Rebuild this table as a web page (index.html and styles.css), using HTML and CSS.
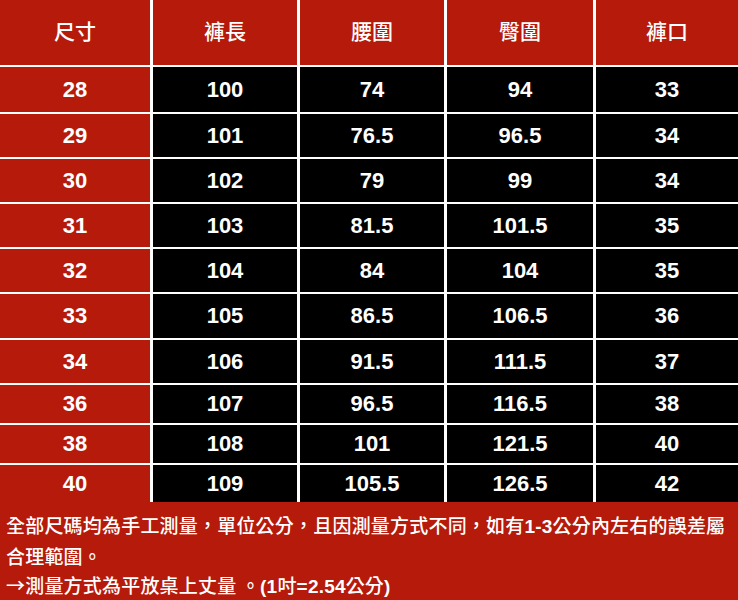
FILE: index.html
```html
<!DOCTYPE html>
<html lang="zh-Hant">
<head>
<meta charset="utf-8">
<title>尺寸表</title>
<link rel="stylesheet" href="styles.css">
</head>
<body>
<div class="sheet">
  <div class="size-table">
    <div class="cell head">尺寸</div>
    <div class="cell head">褲長</div>
    <div class="cell head">腰圍</div>
    <div class="cell head">臀圍</div>
    <div class="cell head">褲口</div>

    <div class="cell key">28</div><div class="cell val">100</div><div class="cell val">74</div><div class="cell val">94</div><div class="cell val">33</div>
    <div class="cell key">29</div><div class="cell val">101</div><div class="cell val">76.5</div><div class="cell val">96.5</div><div class="cell val">34</div>
    <div class="cell key">30</div><div class="cell val">102</div><div class="cell val">79</div><div class="cell val">99</div><div class="cell val">34</div>
    <div class="cell key">31</div><div class="cell val">103</div><div class="cell val">81.5</div><div class="cell val">101.5</div><div class="cell val">35</div>
    <div class="cell key">32</div><div class="cell val">104</div><div class="cell val">84</div><div class="cell val">104</div><div class="cell val">35</div>
    <div class="cell key">33</div><div class="cell val">105</div><div class="cell val">86.5</div><div class="cell val">106.5</div><div class="cell val">36</div>
    <div class="cell key">34</div><div class="cell val">106</div><div class="cell val">91.5</div><div class="cell val">111.5</div><div class="cell val">37</div>
    <div class="cell key">36</div><div class="cell val">107</div><div class="cell val">96.5</div><div class="cell val">116.5</div><div class="cell val">38</div>
    <div class="cell key">38</div><div class="cell val">108</div><div class="cell val">101</div><div class="cell val">121.5</div><div class="cell val">40</div>
    <div class="cell key">40</div><div class="cell val">109</div><div class="cell val">105.5</div><div class="cell val">126.5</div><div class="cell val">42</div>
  </div>
  <div class="notes">
    <p>全部尺碼均為手工測量<span class="punct">，</span>單位公分<span class="punct">，</span>且因測量方式不同<span class="punct">，</span>如有<span class="num">1-3</span>公分內左右的誤差屬合理範圍<span class="punct">。</span></p>
    <p>→測量方式為平放桌上丈量 <span class="punct">。</span><span class="num">(1</span>吋<span class="num">=2.54</span>公分<span class="num">)</span></p>
  </div>
</div>
</body>
</html>
```
FILE: styles.css
```css
html, body {
  margin: 0;
  padding: 0;
  background: #b51a0b;
}

.sheet {
  width: 738px;
  height: 600px;
  background: #b51a0b;
  overflow: hidden;
}

.size-table {
  display: grid;
  grid-template-columns: 150px 144px 144px 146px 1fr;
  grid-template-rows: 65px 45px 43px 43px 43px 43px 44px 43px 38px 38px 37px;
  column-gap: 3px;
  row-gap: 2px;
  background: #ffffff;
}

.cell {
  display: flex;
  align-items: center;
  justify-content: center;
  color: #ffffff;
  font-family: "Liberation Sans", "Noto Sans CJK TC", sans-serif;
  font-weight: bold;
  font-size: 22px;
}

.head {
  background: #b51a0b;
  font-family: "Noto Sans CJK TC", sans-serif;
  font-weight: 500;
  font-size: 21px;
  padding-bottom: 5px;
}

.key {
  background: #b51a0b;
}

.val {
  background: #000000;
}

.notes {
  padding: 8px 6px 0 6px;
  color: #ffffff;
  font-family: "Noto Sans CJK TC", sans-serif;
  font-weight: 500;
  font-size: 19px;
  line-height: 29px;
  letter-spacing: 0.2px;
}

.notes p {
  margin: 0;
}

.punct {
  font-family: "Noto Sans CJK SC", sans-serif;
}

.num {
  font-family: "Liberation Sans", sans-serif;
  font-weight: bold;
}
```
